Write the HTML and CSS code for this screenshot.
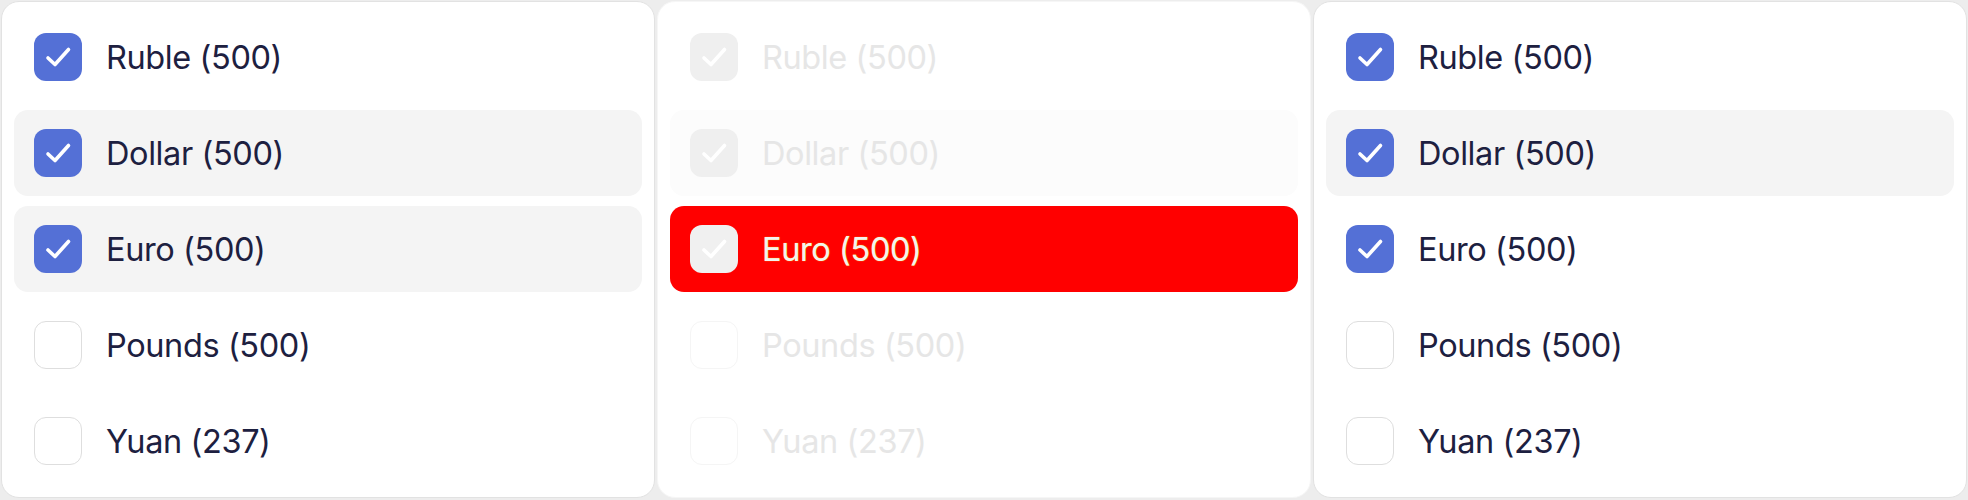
FILE: index.html
```html
<!DOCTYPE html>
<html lang="en">
<head>
<meta charset="utf-8">
<title>Currency filter</title>
<link rel="stylesheet" href="styles.css">
</head>
<body>
<div class="board">
  <div class="panel">
    <div class="row"><span class="box on"><svg viewBox="0 0 48 48"><path d="M14 25 L21 31.5 L34.5 16.5"/></svg></span><span class="label">Ruble (500)</span></div>
    <div class="row hl"><span class="box on"><svg viewBox="0 0 48 48"><path d="M14 25 L21 31.5 L34.5 16.5"/></svg></span><span class="label">Dollar (500)</span></div>
    <div class="row hl"><span class="box on"><svg viewBox="0 0 48 48"><path d="M14 25 L21 31.5 L34.5 16.5"/></svg></span><span class="label">Euro (500)</span></div>
    <div class="row"><span class="box"></span><span class="label">Pounds (500)</span></div>
    <div class="row"><span class="box"></span><span class="label">Yuan (237)</span></div>
  </div>
  <div class="panel disabled">
    <div class="row"><span class="box on"><svg viewBox="0 0 48 48"><path d="M14 25 L21 31.5 L34.5 16.5"/></svg></span><span class="label">Ruble (500)</span></div>
    <div class="row hl"><span class="box on"><svg viewBox="0 0 48 48"><path d="M14 25 L21 31.5 L34.5 16.5"/></svg></span><span class="label">Dollar (500)</span></div>
    <div class="row alert"><span class="box on"><svg viewBox="0 0 48 48"><path d="M14 25 L21 31.5 L34.5 16.5"/></svg></span><span class="label">Euro (500)</span></div>
    <div class="row"><span class="box"></span><span class="label">Pounds (500)</span></div>
    <div class="row"><span class="box"></span><span class="label">Yuan (237)</span></div>
  </div>
  <div class="panel">
    <div class="row"><span class="box on"><svg viewBox="0 0 48 48"><path d="M14 25 L21 31.5 L34.5 16.5"/></svg></span><span class="label">Ruble (500)</span></div>
    <div class="row hl"><span class="box on"><svg viewBox="0 0 48 48"><path d="M14 25 L21 31.5 L34.5 16.5"/></svg></span><span class="label">Dollar (500)</span></div>
    <div class="row"><span class="box on"><svg viewBox="0 0 48 48"><path d="M14 25 L21 31.5 L34.5 16.5"/></svg></span><span class="label">Euro (500)</span></div>
    <div class="row"><span class="box"></span><span class="label">Pounds (500)</span></div>
    <div class="row"><span class="box"></span><span class="label">Yuan (237)</span></div>
  </div>
</div>
</body>
</html>
```
FILE: styles.css
```css
html, body {
  margin: 0;
  padding: 0;
  background: #ededed;
}
body {
  font-family: Inter, "Noto Sans", sans-serif;
  width: 1968px;
  height: 500px;
  overflow: hidden;
}
.board {
  display: grid;
  grid-template-columns: 1fr 1fr 1fr;
  gap: 2px;
  padding: 1px;
  height: 498px;
}
.panel {
  background: #ffffff;
  border: 1.5px solid #e2e2e2;
  border-radius: 18px;
  padding: 12px 12px;
  display: flex;
  flex-direction: column;
  gap: 10px;
  box-sizing: border-box;
  height: 497px;
}
.row {
  height: 86px;
  display: flex;
  align-items: center;
  gap: 24px;
  padding-left: 20px;
  border-radius: 14px;
  box-sizing: border-box;
}
.row.hl {
  background: #f4f4f4;
}
.box {
  width: 48px;
  height: 48px;
  border-radius: 12px;
  box-sizing: border-box;
  border: 1.5px solid #dedede;
  background: #ffffff;
  flex: none;
  display: flex;
}
.box.on {
  background: #5470d6;
  border: none;
}
.box svg {
  width: 48px;
  height: 48px;
}
.box svg path {
  fill: none;
  stroke: #ffffff;
  stroke-width: 3.6;
  stroke-linecap: round;
  stroke-linejoin: round;
}
.label {
  font-size: 32.5px;
  font-weight: 400;
  color: #1d2040;
  letter-spacing: -0.4px;
}

/* disabled panel */
.panel.disabled {
  border-color: #f6f6f6;
}
.panel.disabled .row.hl {
  background: #fcfcfc;
}
.panel.disabled .box {
  border-color: #f5f5f5;
}
.panel.disabled .box.on {
  background: #efefef;
}
.panel.disabled .label {
  color: #e6e6e6;
}
.panel.disabled .row.alert {
  background: #ff0000;
  border-radius: 14px;
}
.panel.disabled .row.alert .box.on {
  background: #f0f0f0;
}
.panel.disabled .row.alert .label {
  color: #f2f2f2;
  text-shadow: 0 0 1px #ffff00;
}
```
